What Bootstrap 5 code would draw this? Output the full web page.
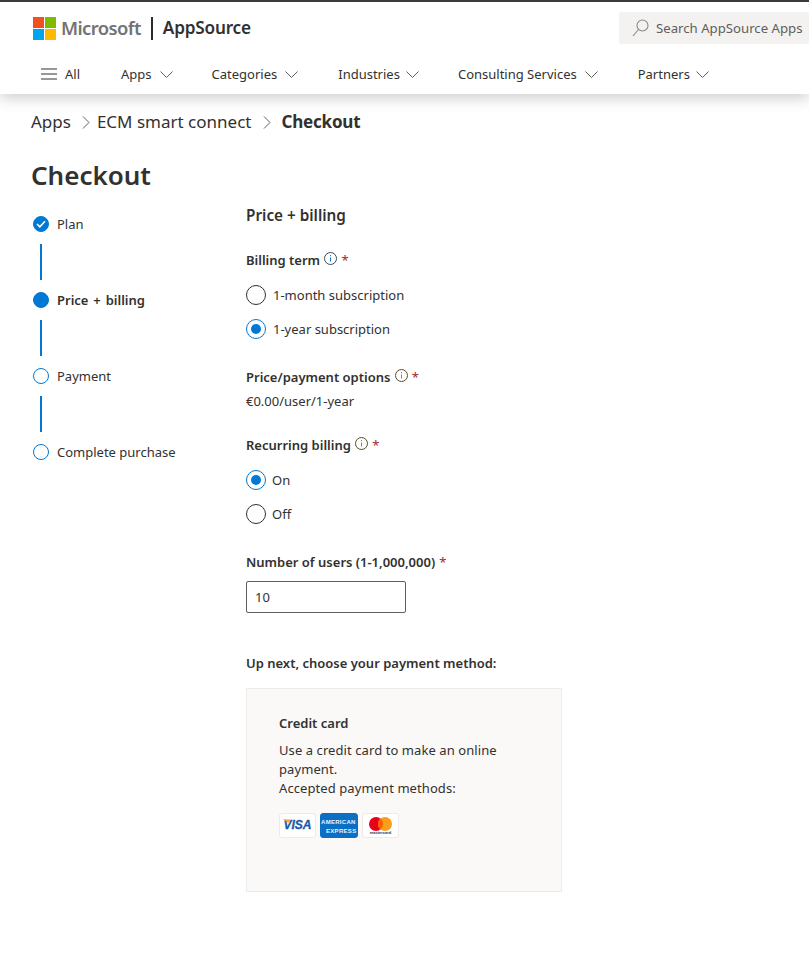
<!DOCTYPE html>
<html lang="en">
<head>
    <meta charset="UTF-8">
    <meta name="viewport" content="width=device-width, initial-scale=1.0">
    <title>Checkout - AppSource</title>
    <link href="https://cdn.jsdelivr.net/npm/bootstrap@5.3.0/dist/css/bootstrap.min.css" rel="stylesheet">
    <style>
        html, body { overflow-x: hidden; }
        body {
            font-family: "Noto Sans", "Open Sans", sans-serif;
            font-size: 13px;
            color: #323130;
            line-height: 20px;
            background: #fff;
        }
        /* header */
        .site-head {
            height: 94px;
            border-top: 2px solid #3b3b3b;
            box-shadow: 0 4px 14px rgba(0, 0, 0, .2);
            background: #fff;
        }
        .head-top { height: 52px; padding: 10px 0 0 33px; }
        .ms-logo { margin-top: 5px; flex-shrink: 0; }
        .ms-word { font-size: 18.4px; font-weight: 600; color: #737373; letter-spacing: -.6px; margin: 4px 0 0 5px; line-height: 24px; }
        .head-sep { width: 2px; height: 23px; background: #2b2b2b; margin: 5px 10px 0 10px; }
        .as-word { font-size: 17.2px; font-weight: 600; color: #323130; letter-spacing: -.2px; margin-top: 4px; line-height: 24px; }
        .search-box {
            width: 190px;
            height: 32px;
            background: #f3f2f1;
            border-radius: 2px;
            padding-left: 13px;
            color: #605e5c;
            font-size: 13.2px;
            white-space: nowrap;
            overflow: hidden;
            flex-shrink: 0;
        }
        .search-box svg { margin-right: -1px; }
        .head-nav { height: 40px; padding-left: 41px; }
        .nav-item-x { color: #323130; white-space: nowrap; }
        .nav-item-x svg { margin-left: 8px; margin-bottom: 2px; }
        .nav-apps { margin-left: 41px; }
        .nav-cats, .nav-cons { margin-left: 39px; }
        .nav-inds, .nav-part { margin-left: 40px; }
        .nav-inds svg, .nav-part svg { margin-left: 6px; }
        .nav-item-x .bars-ic { margin: 0 8px 0 0; }
        /* breadcrumb and title */
        .crumbs { padding: 6px 0 0 31px; font-size: 17px; height: 50px; line-height: 24px; color: #323130; }
        .crumb-arrow-a { margin: 0 7px 0 11px; }
        .crumb-arrow-b { margin: 0 10px 0 12px; }
        .crumb-now { font-weight: 700; letter-spacing: -.2px; }
        .page-title { font-size: 26px; font-weight: 600; line-height: 36px; margin: 13px 0 0 31px; color: #323130; }
        /* steps */
        .layout-wrap { padding: 12px 0 0 33px; }
        .steps-col { width: 213px; flex-shrink: 0; padding-top: 9px; }
        .step-row { height: 20px; }
        .step-now { font-weight: 600; word-spacing: 1.5px; }
        .step-dot {
            width: 16px; height: 16px; border-radius: 50%;
            border: 1.5px solid #0078d4;
            margin-right: 8px; flex-shrink: 0;
        }
        .step-dot.on { background: #0078d4; }
        .step-line { width: 2px; height: 36px; background: #0078d4; margin: 10px 0 10px 7px; }
        /* form */
        .form-col { width: 316px; flex-shrink: 0; }
        .sec-head { font-size: 15.3px; font-weight: 600; line-height: 20px; margin-bottom: 25px; }
        .field-label { font-weight: 600; line-height: 20px; }
        .req { color: #a4262c; font-weight: 400; margin-left: 4px; }
        .info-i { margin: 0 0 6px 1px; vertical-align: middle; }
        .radio-row { height: 20px; margin-top: 14px; }
        .radio-ring {
            width: 20px; height: 20px; border-radius: 50%;
            border: 1.5px solid #323130;
            margin-right: 7px; flex-shrink: 0;
        }
        .radio-ring.picked { border-color: #0078d4; }
        .radio-ring.picked::after {
            content: ""; width: 10px; height: 10px; border-radius: 50%; background: #0078d4;
        }
        .short-label { margin-left: -1px; }
        .label-gap { margin-top: 28px; }
        .label-gap-sm { margin-top: 24px; }
        .price-line { margin-top: 3px; }
        .users-input {
            width: 160px; height: 32px;
            border: 1px solid #605e5c; border-radius: 2px;
            padding: 0 8px; font: inherit; color: #323130;
            outline: none; display: block; margin-top: 9px;
        }
        /* payment card */
        .next-label { margin-top: 40px; }
        .pay-box {
            width: 316px; height: 204px;
            background: #faf9f8;
            border: 1px solid #edebe9;
            padding: 24px 32px;
            margin-top: 15px;
        }
        .pay-title { font-weight: 600; margin-bottom: 8px; }
        .pay-text { line-height: 19px; letter-spacing: .08px; }
        .pay-logos { margin-top: 15px; gap: 4px; }
        .logo-tile {
            width: 37px; height: 25px; border: 1px solid #edebe9; border-radius: 3px;
            background: #fff; overflow: hidden;
        }
        .visa-word {
            position: relative;
            font: italic 700 12px "Liberation Sans", sans-serif;
            color: #1a5aa8;
            -webkit-text-stroke: .3px #1a5aa8;
        }
        .visa-word::before {
            content: ""; position: absolute; left: -1px; top: 1px;
            width: 8px; height: 4px; background: #f7a823;
            clip-path: polygon(0 0, 100% 0, 100% 100%);
        }
        .amex-tile {
            background: #0b6fc4; border-color: #0b6fc4; width: 38px; color: #e6f3ff;
            font: 700 6px/9px "Liberation Sans", sans-serif; letter-spacing: .3px;
            padding-top: 4px; white-space: nowrap;
        }
        .amex-low { padding-left: 5px; }
        .mc-tile { padding-top: 3px; }
        .mc-word { font: 700 4px/4px "Liberation Sans", sans-serif; color: #333; }
    </style>
</head>
<body>
    <!-- header -->
    <header class="site-head">
        <div class="head-top d-flex">
            <svg class="ms-logo" width="23" height="23" viewBox="0 0 23 23">
                <rect width="11" height="11" fill="#f25022"/>
                <rect x="12" width="11" height="11" fill="#7fba00"/>
                <rect y="12" width="11" height="11" fill="#00a4ef"/>
                <rect x="12" y="12" width="11" height="11" fill="#ffb900"/>
            </svg>
            <span class="ms-word">Microsoft</span>
            <span class="head-sep"></span>
            <span class="as-word">AppSource</span>
            <div class="search-box d-flex align-items-center gap-2 ms-auto">
                <svg width="17" height="18" viewBox="0 0 17 18" fill="none" stroke="#8a8886" stroke-width="1.1">
                    <circle cx="10.5" cy="6.5" r="5.5"/>
                    <path d="M6.5 10.5 1 17"/>
                </svg>
                <span>Search AppSource Apps</span>
            </div>
        </div>
        <nav class="head-nav d-flex align-items-center">
            <span class="nav-item-x d-flex align-items-center">
                <svg class="bars-ic" width="16" height="12" viewBox="0 0 16 12" stroke="#323130" stroke-width="1.2"><path d="M0 1h16M0 6h16M0 11h16"/></svg>All
            </span>
            <span class="nav-item-x nav-apps">Apps<svg width="13" height="7" viewBox="0 0 13 7" fill="none" stroke="#605e5c"><path d="M.5.5l6 6 6-6"/></svg></span>
            <span class="nav-item-x nav-cats">Categories<svg width="13" height="7" viewBox="0 0 13 7" fill="none" stroke="#605e5c"><path d="M.5.5l6 6 6-6"/></svg></span>
            <span class="nav-item-x nav-inds">Industries<svg width="13" height="7" viewBox="0 0 13 7" fill="none" stroke="#605e5c"><path d="M.5.5l6 6 6-6"/></svg></span>
            <span class="nav-item-x nav-cons">Consulting Services<svg width="13" height="7" viewBox="0 0 13 7" fill="none" stroke="#605e5c"><path d="M.5.5l6 6 6-6"/></svg></span>
            <span class="nav-item-x nav-part">Partners<svg width="13" height="7" viewBox="0 0 13 7" fill="none" stroke="#605e5c"><path d="M.5.5l6 6 6-6"/></svg></span>
        </nav>
    </header>

    <!-- breadcrumb -->
    <div class="crumbs d-flex align-items-center">
        <span>Apps</span>
        <svg class="crumb-arrow-a" width="8" height="13" viewBox="0 0 8 13" fill="none" stroke="#605e5c"><path d="M1 .5l6 6-6 6"/></svg>
        <span>ECM smart connect</span>
        <svg class="crumb-arrow-b" width="8" height="13" viewBox="0 0 8 13" fill="none" stroke="#605e5c"><path d="M1 .5l6 6-6 6"/></svg>
        <span class="crumb-now">Checkout</span>
    </div>

    <h1 class="page-title">Checkout</h1>

    <div class="layout-wrap d-flex">
        <!-- steps -->
        <div class="steps-col">
            <div class="step-row d-flex align-items-center">
                <span class="step-dot on d-flex align-items-center justify-content-center">
                    <svg width="10" height="8" viewBox="0 0 10 8" fill="none" stroke="#fff" stroke-width="1.6"><path d="M1 4l2.8 2.8L9 1.2"/></svg>
                </span>Plan
            </div>
            <div class="step-line"></div>
            <div class="step-row step-now d-flex align-items-center"><span class="step-dot on"></span>Price + billing</div>
            <div class="step-line"></div>
            <div class="step-row d-flex align-items-center"><span class="step-dot"></span>Payment</div>
            <div class="step-line"></div>
            <div class="step-row d-flex align-items-center"><span class="step-dot"></span>Complete purchase</div>
        </div>

        <!-- form -->
        <div class="form-col">
            <div class="sec-head">Price + billing</div>

            <div class="field-label">Billing term
                <svg class="info-i" width="13" height="13" viewBox="0 0 13 13" fill="none" stroke="#3b4a5e"><circle cx="6.5" cy="6.5" r="6"/><path stroke="#0078d4" d="M6.5 5.5v4M6.5 3v1.2"/></svg><span class="req">*</span>
            </div>
            <div class="radio-row d-flex align-items-center"><span class="radio-ring"></span>1-month subscription</div>
            <div class="radio-row d-flex align-items-center"><span class="radio-ring picked d-flex align-items-center justify-content-center"></span>1-year subscription</div>

            <div class="field-label label-gap">Price/payment options
                <svg class="info-i" width="13" height="13" viewBox="0 0 13 13" fill="none" stroke="#5a4a2e"><circle cx="6.5" cy="6.5" r="6"/><path stroke="#ca7a10" d="M6.5 5.5v4M6.5 3v1.2"/></svg><span class="req">*</span>
            </div>
            <div class="price-line">€0.00/user/1-year</div>

            <div class="field-label label-gap-sm">Recurring billing
                <svg class="info-i" width="13" height="13" viewBox="0 0 13 13" fill="none" stroke="#5a4a2e"><circle cx="6.5" cy="6.5" r="6"/><path stroke="#ca7a10" d="M6.5 5.5v4M6.5 3v1.2"/></svg><span class="req">*</span>
            </div>
            <div class="radio-row d-flex align-items-center"><span class="radio-ring picked d-flex align-items-center justify-content-center"></span><span class="short-label">On</span></div>
            <div class="radio-row d-flex align-items-center"><span class="radio-ring"></span><span class="short-label">Off</span></div>

            <div class="field-label label-gap">Number of users (1-1,000,000)<span class="req">*</span></div>
            <input class="users-input" type="text" value="10">

            <div class="field-label next-label">Up next, choose your payment method:</div>
            <div class="pay-box">
                <div class="pay-title">Credit card</div>
                <div class="pay-text">Use a credit card to make an online payment.<br>Accepted payment methods:</div>
                <div class="pay-logos d-flex">
                    <span class="logo-tile d-flex align-items-center justify-content-center"><span class="visa-word">VISA</span></span>
                    <span class="logo-tile amex-tile">AMERICAN<br><span class="amex-low">EXPRESS</span></span>
                    <span class="logo-tile mc-tile d-flex flex-column align-items-center">
                        <svg width="23" height="14" viewBox="0 0 23 14"><circle cx="7" cy="7" r="7" fill="#eb001b"/><circle cx="16" cy="7" r="7" fill="#f79e1b"/><path d="M11.5 1.6a7 7 0 0 1 0 10.8 7 7 0 0 1 0-10.8z" fill="#ff5f00"/></svg>
                        <span class="mc-word">mastercard</span>
                    </span>
                </div>
            </div>
        </div>
    </div>

    <script src="https://cdn.jsdelivr.net/npm/bootstrap@5.3.0/dist/js/bootstrap.bundle.min.js"></script>
</body>
</html>
